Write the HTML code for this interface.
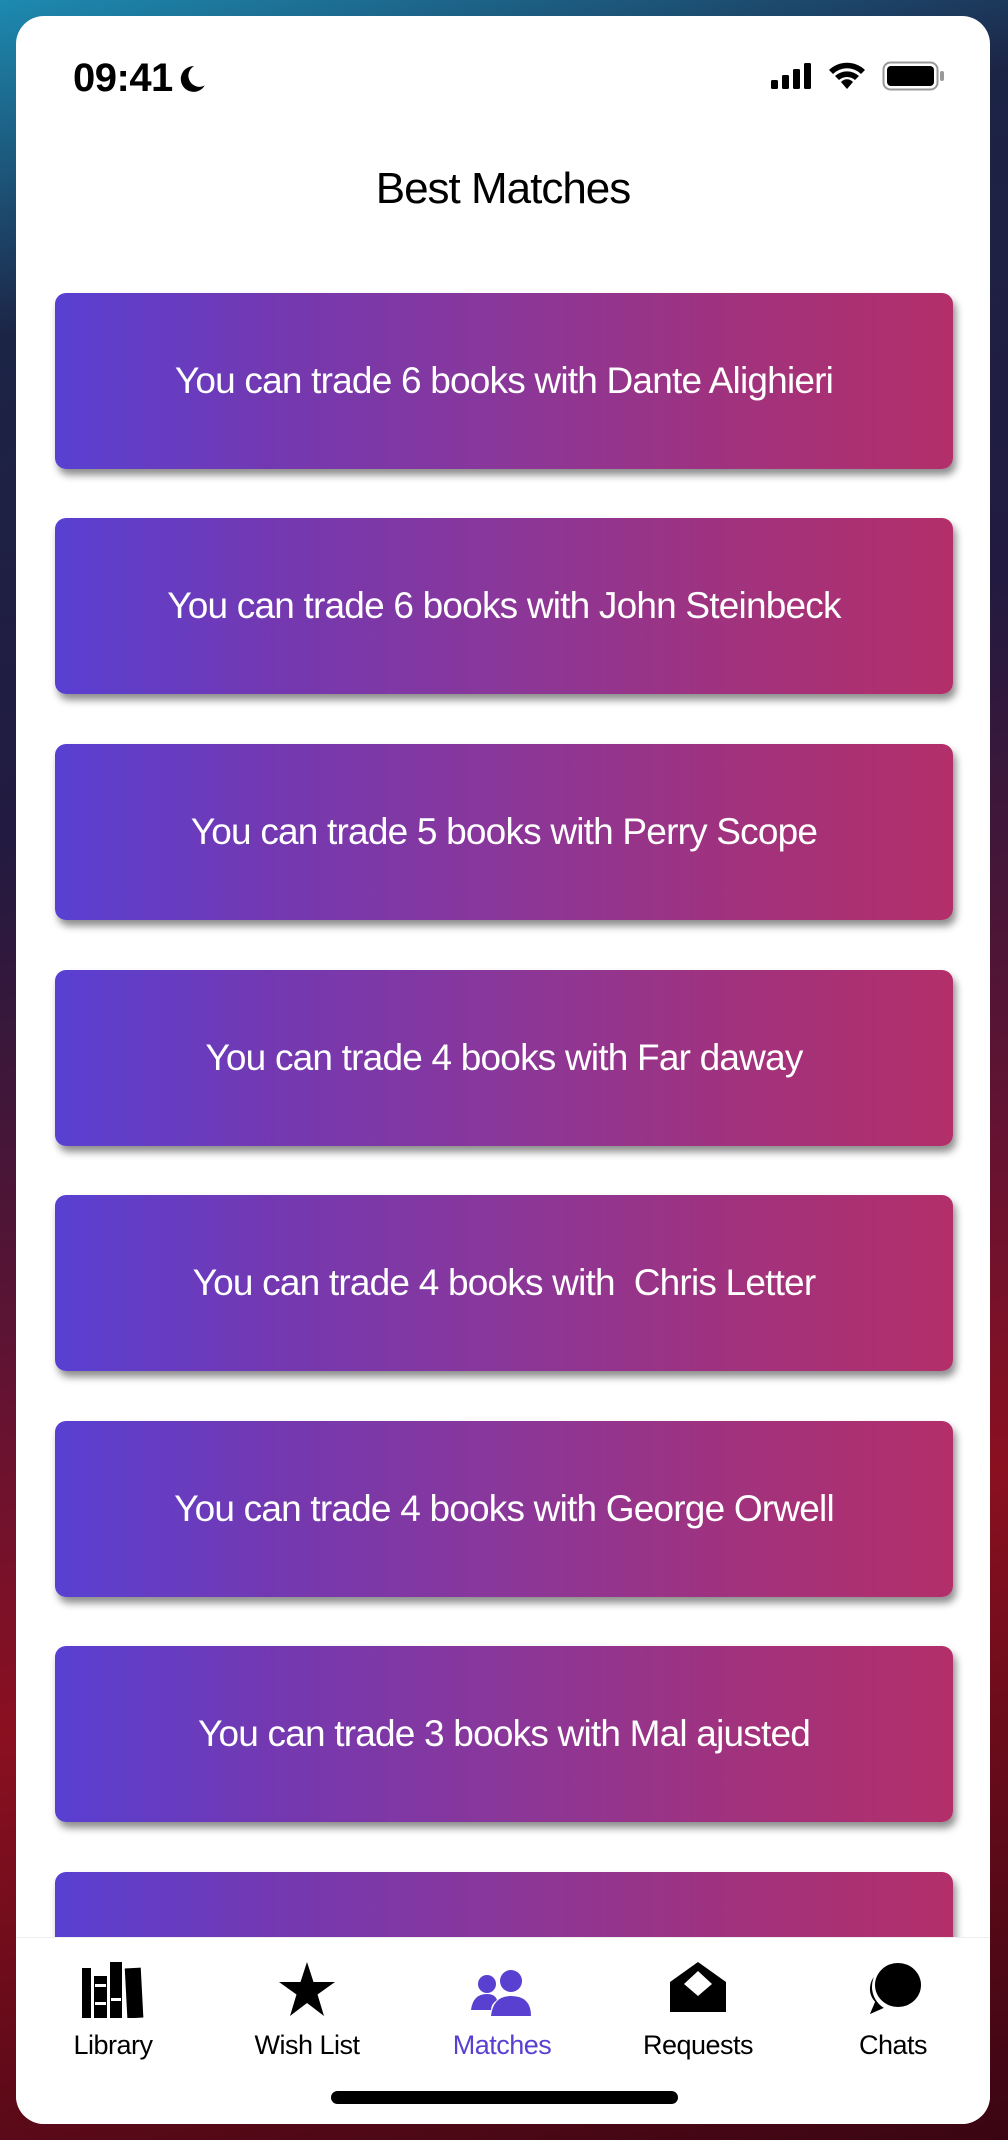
<!DOCTYPE html>
<html><head><meta charset="utf-8"><style>
*{margin:0;padding:0;box-sizing:border-box}
html,body{width:1008px;height:2140px;overflow:hidden}
body{position:relative;font-family:"Liberation Sans",sans-serif;
background:linear-gradient(165deg,#1d8ab0 0%,#1c2446 14%,#221a40 35%,#6a1230 60%,#8a1020 72%,#3a0512 100%);}
.phone{position:absolute;left:16px;top:16px;width:974px;height:2108px;background:#fff;border-radius:28px;overflow:hidden}
.time{position:absolute;left:57px;top:40px;font-size:40px;font-weight:bold;letter-spacing:-0.5px}
.title{position:absolute;left:0;width:100%;top:148px;text-align:center;font-size:44px;letter-spacing:-1px}
.card{position:absolute;left:39px;width:898px;height:176px;border-radius:11px;
background:linear-gradient(90deg,#5940d2 0%,#7438b0 25%,#8a379a 50%,#a0327e 75%,#b32f6a 100%);
box-shadow:3px 6px 8px rgba(0,0,0,0.45);color:#fff;font-size:37px;letter-spacing:-0.8px;
display:flex;align-items:center;justify-content:center}
.tabbar{position:absolute;left:0;top:1921px;width:974px;height:187px;background:#fff;border-top:1px solid #eee}
.tab{position:absolute;top:0;width:160px;text-align:center;font-size:27px;letter-spacing:-0.5px}
.tab svg{position:absolute;left:50%;transform:translateX(-50%);top:24px}
.tab span{position:absolute;left:0;width:100%;top:92px}
.home{position:absolute;left:315px;top:2075px;width:347px;height:13px;border-radius:7px;background:#000}
</style></head><body>
<div class="phone">
<div class="time">09:41<svg width="28" height="30" viewBox="0 0 26 28" style="margin-left:6px;vertical-align:-3px"><path d="M14 2A12 12 0 1 0 24 20A10 10 0 0 1 14 2Z" fill="#000"/></svg></div>
<svg style="position:absolute;left:755px;top:47px" width="44" height="26" viewBox="0 0 44 26"><rect x="0" y="17" width="7" height="9" rx="1.5"/><rect x="11" y="12" width="7" height="14" rx="1.5"/><rect x="22" y="6" width="7" height="20" rx="1.5"/><rect x="33" y="0" width="7" height="26" rx="1.5"/></svg>
<svg style="position:absolute;left:811px;top:44px" width="40" height="30" viewBox="0 0 40 30"><path d="M2 10A26 26 0 0 1 38 10L34 14A20 20 0 0 0 6 14Z M8 16A18 18 0 0 1 32 16L28 20A12 12 0 0 0 12 20Z M14 22A8 8 0 0 1 26 22L20 29Z"/></svg>
<svg style="position:absolute;left:866px;top:45px" width="64" height="30" viewBox="0 0 64 30"><rect x="1.5" y="1.5" width="54" height="27" rx="7" fill="none" stroke="#999" stroke-width="2"/><rect x="5" y="5" width="47" height="20" rx="4"/><rect x="58" y="10" width="4" height="10" rx="2" fill="#999"/></svg>
<div class="title">Best Matches</div>
<div class="card" style="top:277px">You can trade 6 books with Dante Alighieri</div>
<div class="card" style="top:502px">You can trade 6 books with John Steinbeck</div>
<div class="card" style="top:728px">You can trade 5 books with Perry Scope</div>
<div class="card" style="top:954px">You can trade 4 books with Far daway</div>
<div class="card" style="top:1179px">You can trade 4 books with&nbsp; Chris Letter</div>
<div class="card" style="top:1405px">You can trade 4 books with George Orwell</div>
<div class="card" style="top:1630px">You can trade 3 books with Mal ajusted</div>
<div class="card" style="top:1856px"></div>
<div class="tabbar">
<div class="tab" style="left:17px"><svg width="62" height="56" viewBox="0 0 62 56"><rect x="0" y="6" width="9" height="50"/><rect x="12" y="14" width="13" height="42"/><rect x="28" y="0" width="12" height="56"/><rect x="44" y="6" width="16" height="50" transform="rotate(-3 52 30)"/><rect x="13" y="22" width="11" height="3" fill="#fff"/><rect x="13" y="40" width="11" height="3" fill="#fff"/><rect x="29" y="36" width="10" height="3" fill="#fff"/></svg><span>Library</span></div>
<div class="tab" style="left:211px"><svg width="58" height="56" viewBox="0 0 58 56"><path d="M29 0L35.5 20H57L39.5 32.5L46 54L29 41L12 54L18.5 32.5L1 20H22.5Z"/></svg><span>Wish List</span></div>
<div class="tab" style="left:406px;color:#5a40d0"><svg width="62" height="48" viewBox="0 0 62 48" fill="#5a40d0" style="top:32px"><circle cx="16" cy="14" r="9"/><circle cx="40" cy="11" r="11"/><path d="M0 40Q2 24 16 24Q24 24 26 30Q20 34 20 40Z"/><path d="M20 46Q22 26 40 26Q60 26 60 46Z"/></svg><span>Matches</span></div>
<div class="tab" style="left:602px"><svg width="56" height="52" viewBox="0 0 56 52"><path d="M0 20L28 0L56 20V50H0Z"/><path d="M14 22L28 9L42 22L28 34Z" fill="#fff"/></svg><span>Requests</span></div>
<div class="tab" style="left:797px"><svg width="58" height="58" viewBox="0 0 58 58"><ellipse cx="34" cy="23" rx="23" ry="22"/><path d="M14 10A20 20 0 0 0 10 40L4 54L22 46A24 24 0 0 1 14 10Z" fill="#000" stroke="#fff" stroke-width="2"/></svg><span>Chats</span></div>
</div>
<div class="home"></div>
</div>
</body></html>
